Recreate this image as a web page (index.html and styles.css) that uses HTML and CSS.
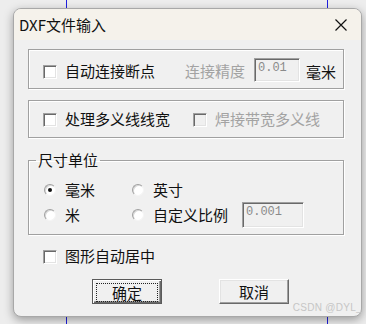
FILE: index.html
```html
<!DOCTYPE html>
<html lang="zh-CN">
<head>
  <meta charset="UTF-8" />
  <title>DXF文件输入</title>
  <link rel="stylesheet" href="styles.css">
</head>
<body>
  <div class="dialog">
    <div class="titlebar">
      <span class="title">DXF文件输入</span>
      <svg class="close" width="12" height="12" viewBox="0 0 12 12">
        <path d="M0.5 0.5 L11.5 11.5 M11.5 0.5 L0.5 11.5" stroke="#111" stroke-width="1.2" fill="none" />
      </svg>
    </div>
    <div class="content">
      <div class="group g1">
        <span class="check"></span>
        <span class="label">自动连接断点</span>
        <span class="label off push">连接精度</span>
        <span class="field f1">0.01</span>
        <span class="label unit">毫米</span>
      </div>
      <div class="group g2">
        <span class="check"></span>
        <span class="label">处理多义线线宽</span>
        <span class="check disabled"></span>
        <span class="label off">焊接带宽多义线</span>
      </div>
      <fieldset class="units">
        <legend>尺寸单位</legend>
        <div class="radios">
          <div class="opt"><span class="radio on"></span><span class="label">毫米</span></div>
          <div class="opt"><span class="radio"></span><span class="label">英寸</span></div>
          <div></div>
          <div class="opt"><span class="radio"></span><span class="label">米</span></div>
          <div class="opt"><span class="radio"></span><span class="label">自定义比例</span></div>
          <span class="field f2">0.001</span>
        </div>
      </fieldset>
      <div class="row center-row">
        <span class="check"></span>
        <span class="label">图形自动居中</span>
      </div>
      <div class="buttons">
        <button class="btn default"><span class="focus">确定</span></button>
        <button class="btn">取消</button>
      </div>
    </div>
  </div>
  <div class="watermark">CSDN @DYL_</div>
</body>
</html>
```

FILE: styles.css
```css
body {
  margin: 0;
  padding: 8px 0 0 13px;
  width: 366px;
  height: 324px;
  box-sizing: border-box;
  overflow: hidden;
  position: relative;
  font-family: "Noto Sans CJK SC", "Noto Sans", sans-serif;
  font-size: 15px;
  color: #111;
  background:
    linear-gradient(#1f1fe0, #1f1fe0) 66px 0 / 1px 100% no-repeat,
    linear-gradient(#1f1fe0, #1f1fe0) 327px 0 / 1px 100% no-repeat,
    #ededed;
}
.dialog {
  width: 349px;
  height: 309px;
  box-sizing: border-box;
  border: 1px solid #a8a8a8;
  border-radius: 8px;
  background: #f0f0f0;
  box-shadow: 0 3px 10px rgba(0, 0, 0, 0.35);
  overflow: hidden;
}
.titlebar {
  height: 31px;
  background: #f5f2eb;
  display: flex;
  align-items: center;
  justify-content: space-between;
  padding: 0 14px 0 5px;
}
.title {
  line-height: 20px;
  margin-top: 1px;
}
.close {
  display: block;
}
.content {
  padding: 9px 17px 0 14px;
}
.group {
  height: 40px;
  box-sizing: border-box;
  border: 1px solid #a0a0a0;
  box-shadow: inset 1px 1px #fff, 1px 1px #fff;
  display: flex;
  align-items: center;
  padding: 0 7px 0 14px;
}
.g1 {
  padding-top: 3px;
}
.g2 {
  height: 38px;
  margin-top: 11px;
}
.label {
  line-height: 20px;
  white-space: nowrap;
}
.off {
  color: #a3a3a3;
}
.push {
  margin-left: auto;
  margin-right: 9px;
}
.unit {
  margin-left: 6px;
  margin-top: 3px;
}
.check {
  width: 12px;
  height: 12px;
  flex: none;
  background: #fff;
  border: 1px solid;
  border-color: #a0a0a0 #fff #fff #a0a0a0;
  box-shadow: inset 1px 1px #696969, inset -1px -1px #e3e3e3;
  margin-right: 8px;
  margin-top: 2px;
}
.check.disabled {
  background: #f0f0f0;
  margin-left: 23px;
}
.field {
  box-sizing: border-box;
  background: #f0f0f0;
  border: 1px solid;
  border-color: #a0a0a0 #fff #fff #a0a0a0;
  box-shadow: inset 1px 1px #696969, inset -1px -1px #e3e3e3;
  font-family: "Liberation Mono", monospace;
  font-size: 12px;
  line-height: 14px;
  color: #8a8a8a;
  padding: 2px 0 0 3px;
}
.f1 {
  width: 46px;
  height: 24px;
  margin-top: -1px;
}
.f2 {
  width: 62px;
  height: 26px;
}
.units {
  margin: 12px 0 0;
  padding: 9px 0 6px 15px;
  border: 1px solid #a0a0a0;
  box-shadow: inset 1px 1px #fff, 1px 1px #fff;
}
.units legend {
  margin-left: -8px;
  padding: 0 2px;
  line-height: 20px;
}
.radios {
  display: grid;
  grid-template-columns: 88px 110px 62px;
  grid-template-rows: 22px 26px;
  row-gap: 1px;
  align-items: center;
}
.opt {
  display: flex;
  align-items: center;
}
.radio {
  width: 12px;
  height: 12px;
  box-sizing: border-box;
  border-radius: 50%;
  border: 1px solid;
  border-color: #a0a0a0 #f4f4f4 #f4f4f4 #a0a0a0;
  background: #fff;
  box-shadow: inset 1px 1px #d8d8d8;
  margin-right: 9px;
  position: relative;
  flex: none;
}
.radio.on::after {
  content: "";
  position: absolute;
  left: 3px;
  top: 3px;
  width: 4px;
  height: 4px;
  border-radius: 50%;
  background: #111;
}
.row {
  display: flex;
  align-items: center;
}
.center-row {
  margin-top: 11px;
  padding-left: 15px;
  height: 20px;
}
.buttons {
  display: flex;
  gap: 57px;
  margin-top: 13px;
  padding-left: 64px;
}
.btn {
  width: 70px;
  height: 25px;
  box-sizing: border-box;
  font-family: inherit;
  font-size: 15px;
  line-height: 19px;
  color: #111;
  background: #f0f0f0;
  border: 1px solid;
  border-color: #fff #696969 #696969 #fff;
  box-shadow: inset -1px -1px #a0a0a0, inset 1px 1px #e3e3e3;
  padding: 0;
}
.btn.default {
  border: 1px solid #5a5a5a;
  box-shadow: inset 1px 1px #fff, inset -1px -1px #696969, inset -2px -2px #a0a0a0;
  padding: 3px;
}
.focus {
  display: block;
  height: 17px;
  line-height: 17px;
  border: 1px dotted #222;
}
.watermark {
  position: absolute;
  right: 4px;
  bottom: 11px;
  font-family: "Liberation Sans", sans-serif;
  font-size: 10px;
  color: #c6c6c6;
  letter-spacing: 0.3px;
}
```
